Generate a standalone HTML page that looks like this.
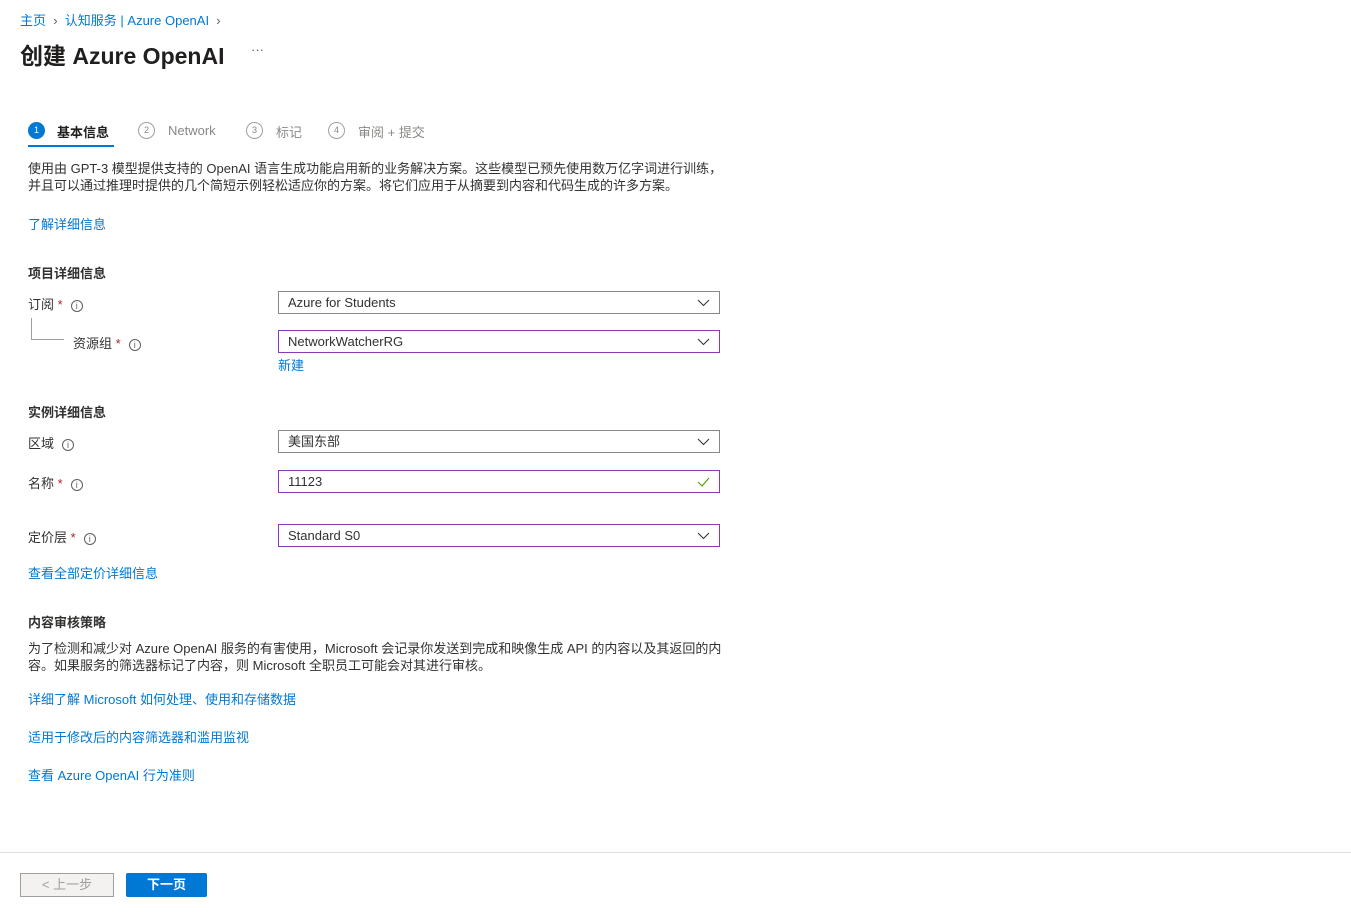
<!DOCTYPE html>
<html><head><meta charset="utf-8"><style>
*{box-sizing:border-box;margin:0;padding:0}
body{width:1351px;height:916px;background:#fff;font-family:"Liberation Sans","Noto Sans CJK SC",sans-serif;font-size:13px;color:#323130;position:relative;overflow:hidden}
.a{position:absolute;white-space:nowrap}
.l{color:#0078d4}
.b{font-weight:bold}
.req{color:#a4262c}
.info{display:inline-block;width:12px;height:12px;border:1px solid #605e5c;border-radius:50%;font-size:9px;line-height:10px;text-align:center;color:#605e5c;vertical-align:0px;margin-left:8px;font-style:normal}
.in{position:absolute;left:278px;width:442px;height:23px;border:1px solid #8a8886;padding-left:9px;line-height:21px;font-size:13px}
.p{border-color:#8a3ab5}
.chev{position:absolute;right:9px;top:5px}
.step{display:inline-block;width:17px;height:17px;border-radius:50%;border:1px solid #a19f9d;color:#8a8886;font-size:9px;text-align:center;line-height:15px}
</style></head><body>
<div class="a l" style="left:20px;top:10px;font-size:13px">主页 <span style="color:#605e5c">&nbsp;›&nbsp;</span> 认知服务 | Azure OpenAI <span style="color:#605e5c">&nbsp;›</span></div>
<div class="a b" style="left:20px;top:37px;font-size:23px;color:#201f1e">创建 Azure OpenAI</div>
<div class="a" style="left:251px;top:42px;color:#605e5c">···</div>

<div class="a" style="left:28px;top:121px"><span class="step" style="background:#0078d4;border-color:#0078d4;color:#fff">1</span></div>
<div class="a b" style="left:57px;top:122px;color:#201f1e">基本信息</div>
<div class="a" style="left:28px;top:145px;width:86px;height:2px;background:#0078d4"></div>
<div class="a" style="left:138px;top:121px"><span class="step">2</span></div>
<div class="a" style="left:168px;top:123px;color:#8a8886">Network</div>
<div class="a" style="left:246px;top:121px"><span class="step">3</span></div>
<div class="a" style="left:276px;top:122px;color:#8a8886">标记</div>
<div class="a" style="left:328px;top:121px"><span class="step">4</span></div>
<div class="a" style="left:358px;top:122px;color:#8a8886">审阅 + 提交</div>

<div class="a" style="left:28px;top:160px;line-height:17px;font-size:13px">使用由 GPT-3 模型提供支持的 OpenAI 语言生成功能启用新的业务解决方案。这些模型已预先使用数万亿字词进行训练，<br>并且可以通过推理时提供的几个简短示例轻松适应你的方案。将它们应用于从摘要到内容和代码生成的许多方案。</div>
<div class="a l" style="left:28px;top:214px">了解详细信息</div>

<div class="a b" style="left:28px;top:263px">项目详细信息</div>
<div class="a" style="left:28px;top:294px">订阅 <span class="req">*</span><i class="info">i</i></div>
<div class="a" style="left:31px;top:318px;width:33px;height:22px;border-left:1px solid #a19f9d;border-bottom:1px solid #a19f9d"></div>
<div class="a" style="left:73px;top:333px">资源组 <span class="req">*</span><i class="info">i</i></div>
<div class="in" style="top:291px">Azure for Students<svg class="chev" width="13" height="12"><path d="M1 3l5.5 5.5L12 3" fill="none" stroke="#323130"/></svg></div>
<div class="in p" style="top:330px">NetworkWatcherRG<svg class="chev" width="13" height="12"><path d="M1 3l5.5 5.5L12 3" fill="none" stroke="#323130"/></svg></div>
<div class="a l" style="left:278px;top:355px">新建</div>

<div class="a b" style="left:28px;top:402px">实例详细信息</div>
<div class="a" style="left:28px;top:433px">区域<i class="info">i</i></div>
<div class="in" style="top:430px">美国东部<svg class="chev" width="13" height="12"><path d="M1 3l5.5 5.5L12 3" fill="none" stroke="#323130"/></svg></div>
<div class="a" style="left:28px;top:473px">名称 <span class="req">*</span><i class="info">i</i></div>
<div class="in p" style="top:470px">11123<svg class="chev" width="13" height="12"><path d="M1 6l4 4L12 2" fill="none" stroke="#57a300" stroke-width="1.2"/></svg></div>
<div class="a" style="left:28px;top:527px">定价层 <span class="req">*</span><i class="info">i</i></div>
<div class="in p" style="top:524px">Standard S0<svg class="chev" width="13" height="12"><path d="M1 3l5.5 5.5L12 3" fill="none" stroke="#323130"/></svg></div>
<div class="a l" style="left:28px;top:563px">查看全部定价详细信息</div>

<div class="a b" style="left:28px;top:612px">内容审核策略</div>
<div class="a" style="left:28px;top:640px;line-height:17px;font-size:13px">为了检测和减少对 Azure OpenAI 服务的有害使用，Microsoft 会记录你发送到完成和映像生成 API 的内容以及其返回的内<br>容。如果服务的筛选器标记了内容，则 Microsoft 全职员工可能会对其进行审核。</div>
<div class="a l" style="left:28px;top:689px">详细了解 Microsoft 如何处理、使用和存储数据</div>
<div class="a l" style="left:28px;top:727px">适用于修改后的内容筛选器和滥用监视</div>
<div class="a l" style="left:28px;top:765px">查看 Azure OpenAI 行为准则</div>

<div class="a" style="left:0;top:852px;width:1351px;height:1px;background:#e1dfdd"></div>
<div class="a" style="left:20px;top:873px;width:94px;height:24px;background:#f3f2f1;border:1px solid #a19f9d;color:#a19f9d;text-align:center;line-height:22px">&lt; 上一步</div>
<div class="a b" style="left:126px;top:873px;width:81px;height:24px;background:#0078d4;color:#fff;text-align:center;line-height:24px;border-radius:2px">下一页</div>
</body></html>
